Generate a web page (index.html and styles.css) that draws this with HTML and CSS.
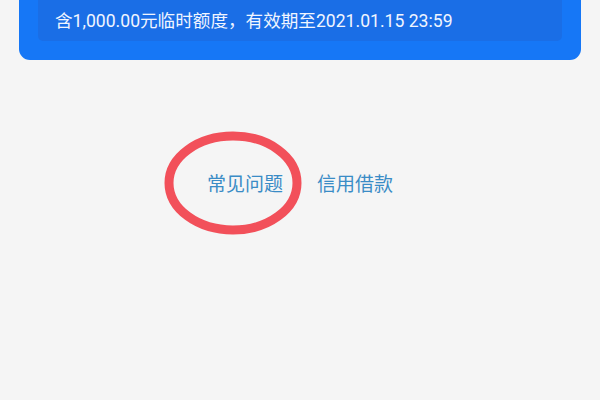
FILE: index.html
```html
<html>
<head>
    <title>额度</title>
    <link rel="stylesheet" href="styles.css">
</head>
<body>
    <div class="card">
        <div class="quota">含1,000.00元临时额度，有效期至2021.01.15 23:59</div>
    </div>

    <div class="links">
        <span class="link faq">
            常见问题
            <svg class="mark" viewBox="0 0 140 106" width="140" height="106">
                <ellipse cx="70" cy="53" rx="64" ry="47" fill="none" stroke="#f2505a" stroke-width="9"/>
            </svg>
        </span>
        <span class="link">信用借款</span>
    </div>
</body>
</html>
```

FILE: styles.css
```css
body {
    background-color: #f5f5f5;
    margin: 0;
    font-family: Roboto, "Noto Sans CJK SC", sans-serif;
}

.card {
    background: #1677f6;
    margin: -27px 19px 0;
    padding: 0 19px 19px;
    border-radius: 0 0 11px 11px;
}

.quota {
    background: #1a6ee6;
    color: #f0f5ff;
    font-size: 17.6px; line-height: 24px;
    padding: 36px 17px 8px;
    border-radius: 0 0 5px 5px;
}

.links {
    display: flex;
    justify-content: center;
    gap: 34px;
    margin-top: 111px;
    font-family: "Noto Sans CJK SC", sans-serif;
    font-size: 19px; line-height: 24px;
}

.link {
    color: #3a8cc6;
}

.faq {
    position: relative;
}

.mark {
    position: absolute;
    left: -44px; top: -41px;
}
```
